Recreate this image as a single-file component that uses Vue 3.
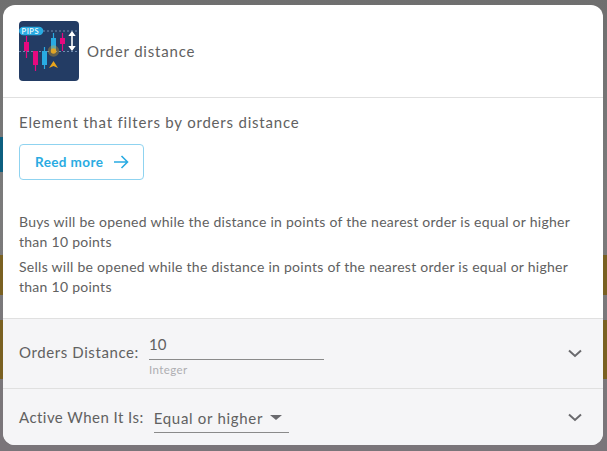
<script setup>
const notes = [
  'Buys will be opened while the distance in points of the nearest order is equal or higher than 10 points',
  'Sells will be opened while the distance in points of the nearest order is equal or higher than 10 points',
]
</script>

<template>
  <div class="page">
    <div class="backdrop">
      <div class="strip strip-left">
        <span class="teal"></span>
        <span class="gold g1"></span>
        <span class="gold g2"></span>
      </div>
      <div class="strip strip-right">
        <span class="gold g1"></span>
        <span class="gold g2"></span>
      </div>
    </div>

    <div class="modal">
      <header class="head">
        <svg class="logo" width="60" height="60" viewBox="0 0 60 60">
          <rect width="60" height="60" rx="4" fill="#233c64" />
          <path d="M24 10H60M0 30.500H60" stroke="#6f8bb0" stroke-width="1" stroke-dasharray="2 2" />
          <path d="M7.500 15V37M16.500 30V50M43.500 12V30" stroke-width="1.200" stroke="#e6097f" />
          <path d="M25.500 26V48M34.500 12V32" stroke-width="1.200" stroke="#29abe2" />
          <rect x="5" y="21" width="5" height="9" fill="#e6097f" />
          <rect x="14" y="30" width="5" height="14" fill="#e6097f" />
          <rect x="23" y="30" width="5" height="14" fill="#29abe2" />
          <rect x="32" y="17" width="5" height="13" fill="#29abe2" />
          <rect x="41" y="17" width="5" height="6" fill="#e6097f" />
          <circle cx="34.500" cy="30" r="5.700" fill="#e0a526" opacity="0.35" />
          <circle cx="34.500" cy="30" r="2.700" fill="#e0a526" />
          <path d="M30 47L34.500 40L39 47L34.500 45Z" fill="#e8a41c" />
          <path d="M53 13V27" stroke="#fff" stroke-width="1.600" />
          <path d="M49.300 15L53 10L56.700 15ZM49.300 25L53 30L56.700 25Z" fill="#fff" />
          <rect x="0" y="5.800" width="24.300" height="8.400" rx="4.200" fill="#29abe2" />
          <text x="2.500" y="12.800" class="pips">PIPS</text>
        </svg>
        <span class="head-title">Order distance</span>
      </header>

      <section class="body">
        <p class="lead">Element that filters by orders distance</p>
        <button class="more">
          Reed more
          <svg width="16" height="14" viewBox="0 0 16 14" fill="none" stroke="#29abe2" stroke-width="1.600">
            <path d="M1 7H14.500M8.500 1L14.500 7L8.500 13" />
          </svg>
        </button>
        <p v-for="n in notes" :key="n" class="note">{{ n }}</p>
      </section>

      <section class="row row-a">
        <span class="label label-a">Orders Distance:</span>
        <div class="field">
          <div class="value">10</div>
          <div class="hint">Integer</div>
        </div>
        <svg class="chev" width="14" height="9" viewBox="0 0 14 9" fill="none" stroke="#6a6a6e" stroke-width="2">
          <path d="M1 1.500L7 7L13 1.500" />
        </svg>
      </section>

      <section class="row row-b">
        <span class="label label-b">Active When It Is:</span>
        <div class="select">
          <span>Equal or higher</span>
          <i class="caret"></i>
        </div>
        <svg class="chev" width="14" height="9" viewBox="0 0 14 9" fill="none" stroke="#6a6a6e" stroke-width="2">
          <path d="M1 1.500L7 7L13 1.500" />
        </svg>
      </section>
    </div>
  </div>
</template>

<style>
html, body { margin: 0; background: #757575; }
</style>

<style scoped>
.page {
  position: relative;
  width: 607px;
  height: 451px;
  overflow: hidden;
  background: linear-gradient(#6f6f6f, #7b7b7b 190px, #7a757a);
  font-family: Lato, sans-serif;
  color: #616161;
}
.backdrop { position: absolute; inset: 0; }
.strip { position: absolute; top: 0; width: 4px; height: 451px; }
.strip-left { left: 0; }
.strip-right { right: 0; }
.strip span { position: absolute; left: 0; width: 4px; }
.teal { top: 137px; height: 35px; background: #0d5f80; }
.gold { background: #7a6122; }
.g1 { top: 255px; height: 40px; }
.g2 { top: 320px; height: 59px; }

.modal {
  position: absolute;
  left: 3px;
  top: 5px;
  width: 600px;
  height: 440px;
  border-radius: 12px;
  background: #fff;
  display: flex;
  flex-direction: column;
  overflow: hidden;
}
.head {
  display: flex;
  align-items: center;
  gap: 8px;
  height: 92px;
  padding: 0 16px;
  border-bottom: 1px solid #e0e0e0;
  flex: none;
}
.logo { flex: none; }
.pips { font: 500 7.500px Lato, sans-serif; fill: #fff; letter-spacing: 0.6px; }
.head-title { font-size: 15px; letter-spacing: 0.8px; }
.body { flex: 1; padding: 15px 16px 0; }
.lead { margin: 0; font-size: 15px; line-height: 18px; letter-spacing: 0.8px; }
.more {
  display: flex;
  align-items: center;
  gap: 10px;
  margin: 13px 0 32px;
  width: 125px;
  height: 36px;
  padding: 0 0 0 15px;
  box-sizing: border-box;
  border: 1px solid #8fd3f0;
  border-radius: 4px;
  background: #fff;
  color: #29abe2;
  font: 700 13.500px Lato, sans-serif;
  letter-spacing: 0.4px;
}
.note { margin: 0 0 5px; font-size: 14px; line-height: 20px; width: 560px; letter-spacing: 0.27px; }
.row {
  display: flex;
  align-items: center;
  background: #f5f5f7;
  border-top: 1px solid #e0e0e0;
  padding: 0 21px 0 16px;
  flex: none;
  position: relative;
}
.row-a { height: 69px; }
.row-b { height: 56px; }
.label { font-size: 15px; }
.label-a { letter-spacing: 0.6px; margin-bottom: 4px; }
.label-b { letter-spacing: 0.45px; margin-bottom: 1px; }
.field { margin-left: 10px; width: 175px; align-self: flex-start; padding-top: 16px; }
.value { font-size: 15px; line-height: 19px; height: 24px; border-bottom: 1px solid #8a8a8a; }
.hint { font-size: 11.500px; letter-spacing: 0.4px; color: #aeaeb2; margin-top: 3px; }
.select {
  margin-left: 10px;
  width: 135px;
  height: 30px;
  margin-top: 2px;
  box-sizing: border-box;
  border-bottom: 1px solid #8a8a8a;
  display: flex;
  align-items: center;
  gap: 7px;
  font-size: 15px;
  letter-spacing: 0.7px;
}
.caret {
  width: 0;
  height: 0;
  border-left: 6px solid transparent;
  border-right: 6px solid transparent;
  border-top: 5px solid #6a6a6e;
}
.chev { margin-left: auto; }
</style>
